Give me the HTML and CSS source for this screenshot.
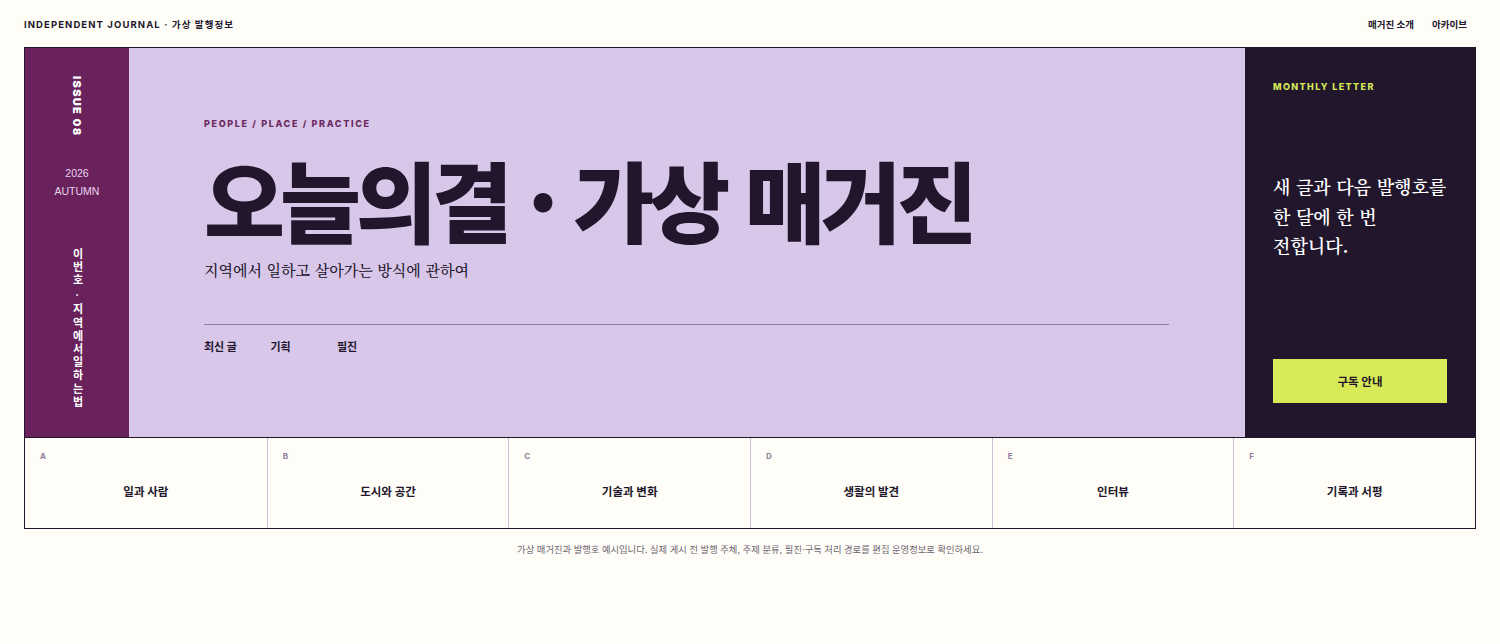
FILE: index.html
```html
<!DOCTYPE html>
<html lang="ko">
<head>
<meta charset="utf-8">
<title>오늘의결 · 가상 매거진</title>
<link rel="stylesheet" href="styles.css">
</head>
<body>
<header class="topbar">
  <div class="brand">INDEPENDENT JOURNAL · 가상 발행정보</div>
  <nav class="topnav">
    <a href="#">매거진 소개</a>
    <a href="#">아카이브</a>
  </nav>
</header>

<main class="frame">
  <section class="hero">
    <aside class="issue">
      <div class="issue-no">ISSUE 08</div>
      <div class="issue-date">2026<br>AUTUMN</div>
      <div class="issue-topic">이번호·지역에서일하는법</div>
    </aside>

    <div class="cover">
      <div class="eyebrow">PEOPLE / PLACE / PRACTICE</div>
      <h1 class="title">오늘의결 · 가상 매거진</h1>
      <p class="subtitle">지역에서 일하고 살아가는 방식에 관하여</p>
      <nav class="cover-links">
        <a href="#">최신 글</a>
        <a href="#">기획</a>
        <a href="#">필진</a>
      </nav>
    </div>

    <aside class="letter">
      <div class="letter-label">MONTHLY LETTER</div>
      <p class="letter-text">새 글과 다음 발행호를<br>한 달에 한 번<br>전합니다.</p>
      <a class="letter-btn" href="#">구독 안내</a>
    </aside>
  </section>

  <section class="topics">
    <a class="topic" href="#"><span class="topic-key">A</span><span class="topic-name">일과 사람</span></a>
    <a class="topic" href="#"><span class="topic-key">B</span><span class="topic-name">도시와 공간</span></a>
    <a class="topic" href="#"><span class="topic-key">C</span><span class="topic-name">기술과 변화</span></a>
    <a class="topic" href="#"><span class="topic-key">D</span><span class="topic-name">생활의 발견</span></a>
    <a class="topic" href="#"><span class="topic-key">E</span><span class="topic-name">인터뷰</span></a>
    <a class="topic" href="#"><span class="topic-key">F</span><span class="topic-name">기록과 서평</span></a>
  </section>
</main>

<footer class="note">가상 매거진과 발행호 예시입니다. 실제 게시 전 발행 주체, 주제 분류, 필진·구독 처리 경로를 편집 운영정보로 확인하세요.</footer>
</body>
</html>
```

FILE: styles.css
```css
* { box-sizing: border-box; }

html, body {
  margin: 0;
  padding: 0;
  background: #fffdf7;
  color: #21162b;
  font-family: Inter, "Noto Sans CJK KR", sans-serif;
}

a { color: inherit; text-decoration: none; }

.topbar {
  height: 47px;
  padding: 0 33px 0 24px;
  display: flex;
  align-items: center;
  justify-content: space-between;
}

.brand {
  font-size: 9.5px;
  font-weight: 700;
  letter-spacing: 1.1px;
}

.topnav {
  display: flex;
  gap: 18px;
  font-size: 9.5px;
  font-weight: 700;
}

.frame {
  margin: 0 24px;
  border: 1px solid #21162b;
}

.hero {
  display: flex;
  height: 390px;
  border-bottom: 1px solid #21162b;
}

/* left issue column */
.issue {
  width: 104px;
  flex: none;
  background: #69225c;
  color: #fff;
  display: flex;
  flex-direction: column;
  align-items: center;
  padding-top: 28px;
}

.issue-no {
  writing-mode: vertical-rl;
  font-size: 11px;
  font-weight: 900;
  letter-spacing: 1.3px;
  line-height: 12px;
}

.issue-date {
  margin-top: 28px;
  font-family: "Liberation Sans", Arial, sans-serif;
  font-size: 10.5px;
  line-height: 18px;
  text-align: center;
  color: #ecd3f0;
}

.issue-topic {
  margin-top: 48px;
  writing-mode: vertical-rl;
  text-orientation: upright;
  font-size: 11px;
  font-weight: 700;
  letter-spacing: 2.2px;
  line-height: 12px;
}

/* cover */
.cover {
  flex: 1;
  background: #d9c7ea;
  padding: 70px 76px 0 75px;
  display: flex;
  flex-direction: column;
}

.eyebrow {
  font-size: 9px;
  font-weight: 800;
  letter-spacing: 1.65px;
  line-height: 12px;
  color: #6a2a5e;
}

.title {
  margin: 18px 0 0;
  font-family: "Noto Sans CJK KR", sans-serif;
  font-size: 88px;
  font-weight: 900;
  line-height: 100px;
  letter-spacing: -5px;
  color: #21162b;
  white-space: nowrap;
}

.subtitle {
  margin: 11px 0 0;
  font-family: "Noto Serif CJK KR", "Noto Sans CJK KR", serif;
  font-size: 15px;
  line-height: 22px;
  font-weight: 500;
  color: #21162b;
}

.cover-links {
  margin-top: 43px;
  border-top: 1px solid #8f7ea4;
  padding-top: 14px;
  display: flex;
  font-size: 11px;
  font-weight: 700;
  line-height: 16px;
}

.cover-links a { width: 66.5px; }

/* right letter column */
.letter {
  width: 230px;
  flex: none;
  background: #21162b;
  color: #fff;
  padding: 33px 28px 34px 28px;
  display: flex;
  flex-direction: column;
}

.letter-label {
  font-size: 9px;
  font-weight: 800;
  letter-spacing: 1.4px;
  line-height: 12px;
  color: #d4e857;
}

.letter-text {
  margin: 79px 0 0;
  font-family: "Noto Serif CJK KR", "Noto Sans CJK KR", serif;
  font-size: 18px;
  line-height: 29.5px;
  font-weight: 600;
}

.letter-btn {
  margin-top: auto;
  height: 44px;
  background: #d8ea57;
  color: #21162b;
  display: flex;
  align-items: center;
  justify-content: center;
  font-size: 11.5px;
  font-weight: 700;
}

/* topics */
.topics {
  display: grid;
  grid-template-columns: repeat(6, 1fr);
  height: 90px;
}

.topic {
  border-left: 1px solid #c8bfd4;
  padding: 12px 15px 0;
  display: flex;
  flex-direction: column;
}

.topic:first-child { border-left: none; }

.topic-key {
  font-size: 8px;
  font-weight: 700;
  color: #8c7f9a;
  line-height: 12px;
}

.topic-name {
  margin-top: 21px;
  text-align: center;
  font-size: 11.5px;
  font-weight: 700;
  line-height: 18px;
}

.note {
  text-align: center;
  font-size: 9.3px;
  color: #6d6673;
  padding-top: 13px;
}
```
